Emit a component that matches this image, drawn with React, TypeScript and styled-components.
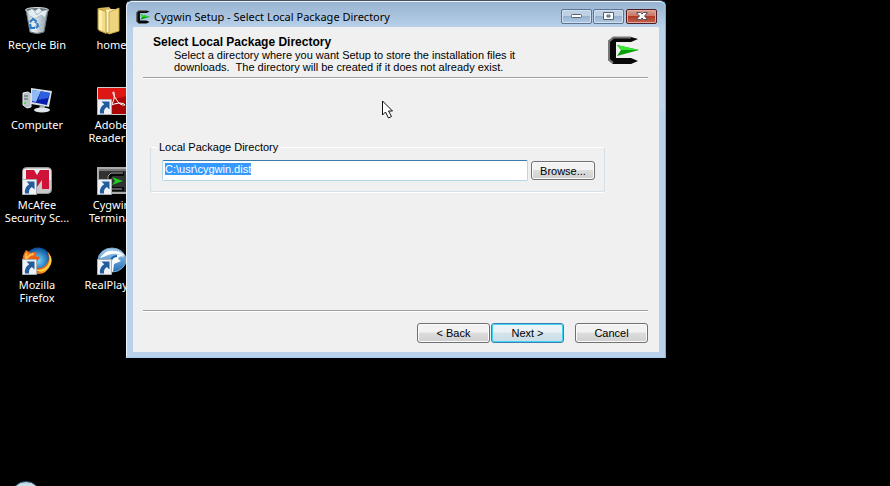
import { useEffect, useRef, type ReactNode } from "react";
import styled, { createGlobalStyle, css } from "styled-components";

const GlobalStyle = createGlobalStyle`
  * { box-sizing: border-box; }
  body { margin: 0; background: #000; }
`;

const Desktop = styled.div`
  position: relative;
  display: flex;
  flex-direction: column;
  justify-content: space-between;
  min-height: 100vh;
  overflow: hidden;
  background: #000;
  color: #fff;
  font-family: "Noto Sans", "Open Sans", sans-serif;
`;

const Shortcuts = styled.nav`
  display: grid;
  grid-template-columns: 74px 75px;
  grid-auto-rows: 80px;
  padding-top: 7px;
`;

const Shortcut = styled.a`
  display: flex;
  flex-direction: column;
  align-items: center;
  gap: 3px;
  color: #fff;
  font-size: 11px;
  line-height: 13px;
  text-align: center;
  text-decoration: none;
  white-space: pre;
`;

const ShortcutIcon = styled.svg`
  width: 30px;
  height: 28px;
  flex: none;
`;

const Taskbar = styled.footer`
  display: flex;
  height: 5px;
  padding-left: 11px;
  overflow: hidden;
`;

const StartButton = styled.button`
  width: 30px;
  height: 30px;
  flex: none;
  padding: 0;
  border: 1px solid #28587c;
  border-radius: 50%;
  background: linear-gradient(#b4cfde, #e0ebf0 5px, #32749f);
`;

const Window = styled.section`
  position: absolute;
  top: 0;
  left: 126px;
  width: 540px;
  max-width: calc(100% - 126px);
  padding: 0 6px 5px;
  border: 1px solid #e9f3fb;
  border-top-color: #45515e;
  border-right-color: #42c7ea;
  border-bottom-color: #a6cdeb;
  border-radius: 6px 6px 0 0;
  background: linear-gradient(#97b3d1, #b9d1ea 27px, #bfd5ec 107px, #b9d1ea 108px);
  box-shadow: inset 0 1px #eef6fc;
  color: #000;
`;

const TitleBar = styled.header`
  display: flex;
  align-items: center;
  gap: 4px;
  height: 26px;
  padding: 5px 2px 0 3px;
`;

const TitleIcon = styled.svg`
  width: 14px;
  height: 14px;
  flex: none;
`;

const Title = styled.h1`
  flex: 1;
  margin: 0;
  overflow: hidden;
  font-size: 11px;
  font-weight: 400;
  line-height: 16px;
  white-space: nowrap;
`;

const Captions = styled.div`
  display: flex;
  gap: 1px;
`;

const CaptionButton = styled.button<{ $close?: boolean }>`
  display: grid;
  place-items: center;
  width: 31px;
  height: 15px;
  padding: 0;
  border: 1px solid #5d7492;
  border-radius: 2px;
  background: linear-gradient(#bdd0e4 45%, #97b2d0 50%, #b2cae3);
  box-shadow: inset 0 0 0 1px #d0dfee;
  ${({ $close }) =>
    $close &&
    css`
      margin-left: 1px;
      border-color: #501f25;
      background: linear-gradient(#d9a296, #ca7564 45%, #b13a25 50%, #c5614e);
      box-shadow: inset 0 0 0 1px #e0a99f;
    `}
`;

const Client = styled.form`
  display: flex;
  flex-direction: column;
  margin: 0;
  padding: 8px 11px 9px 10px;
  background: #f0f0f0;
  font-family: "Liberation Sans", Arial, sans-serif;
  font-size: 11px;
  line-height: 12px;
`;

const PageHeader = styled.div`
  display: flex;
  justify-content: space-between;
  height: 42px;
  padding: 0 9px 0 10px;
`;

const Heading = styled.h2`
  margin: 0;
  font-size: 12px;
  font-weight: 700;
  line-height: 14px;
`;

const Description = styled.p`
  margin: 0;
  padding-left: 21px;
  white-space: pre-wrap;
`;

const Logo = styled.svg`
  width: 32px;
  height: 28px;
  flex: none;
  margin-top: 1px;
`;

const Divider = styled.hr`
  width: 100%;
  height: 2px;
  margin: 0;
  border: 0;
  border-top: 1px solid #a0a0a0;
  border-bottom: 1px solid #fff;
`;

const Group = styled.fieldset`
  display: flex;
  min-width: 0;
  margin: 62px 43px 117px 7px;
  padding: 7px 9px 11px 11px;
  border: 1px solid #d5dfe5;
  border-top-color: #fff;
  border-bottom-color: #fff;
  border-radius: 3px;
  box-shadow: inset 0 -1px #d5dfe5;
`;

const Legend = styled.legend`
  margin-left: -5px;
  padding: 0 2px;
`;

const Field = styled.div`
  display: flex;
  align-items: center;
  gap: 3px;
  width: 100%;
`;

const PathInput = styled.input`
  flex: 1;
  min-width: 0;
  height: 21px;
  padding: 0 2px 3px;
  border: 1px solid #b5d5e9;
  border-top-color: #3d7bad;
  border-radius: 2px;
  outline: none;
  background: #fff;
  font: inherit;
  &::selection {
    background: rgba(51, 153, 255, 0.99);
    color: #fff;
  }
`;

const PushButton = styled.button<{ $primary?: boolean; $compact?: boolean }>`
  width: ${({ $compact }) => ($compact ? 64 : 73)}px;
  height: ${({ $compact }) => ($compact ? 19 : 20)}px;
  padding: 0;
  border: 1px solid ${({ $primary }) => ($primary ? "#3c7fb1" : "#707070")};
  border-radius: 3px;
  background: linear-gradient(#f2f2f2 45%, #dddddd 50%, #cfcfcf);
  box-shadow: inset 0 0 0 1px #fafafa;
  color: #000;
  font: inherit;
  ${({ $primary }) =>
    $primary &&
    css`
      background: linear-gradient(#eaf2f5 45%, #d5e4ea 50%, #c9dde5);
      box-shadow: inset 0 0 0 1px #42d2f7;
    `}
`;

const Actions = styled.div`
  display: flex;
  justify-content: flex-end;
  gap: 11px;
  padding-top: 11px;
`;

const Steps = styled.div`
  display: flex;
  gap: 1px;
`;

const Pointer = styled.svg`
  position: absolute;
  top: 99px;
  left: 381px;
  width: 14px;
  height: 21px;
  pointer-events: none;
`;

const LinkArrow = () => (
  <g>
    <path d="M0.5 12.5h14v15h-14z" fill="#eef2f6" stroke="#a9aeb4" />
    <path d="M4.500 14.500h8v8l-2.600-2.500q-3.600 2-2.800 6.500H3q-1-6 4.200-9.300z" fill="#245b9d" />
  </g>
);

const CygwinMark = () => (
  <>
    <path d="M24 1H6L1 5v19l5 4h18l7-3-7-3H9V6h15l7-3z" fill="#080808" />
    <path d="M24 1.500H6.500L2 5.500v18l4 3.500" fill="none" stroke="#777" strokeWidth="2" />
    <path d="M10 9l22 5-22 6 4-6z" fill="#079e0a" />
    <path d="M10 9l22 5H14z" fill="#36e832" />
  </>
);

const RecycleArt = () => (
  <>
    <defs>
      <linearGradient id="bin">
        <stop stopColor="#a9b9c1" /><stop offset=".35" stopColor="#e8f1f5" /><stop offset="1" stopColor="#8899a3" />
      </linearGradient>
    </defs>
    <path d="M4 3l4 22q7 3 14 0l4-22z" fill="url(#bin)" stroke="#68757d" />
    <ellipse cx="15" cy="3" rx="11.500" ry="2.500" fill="#69757b" stroke="#d5dce0" />
    <path d="M6 4l4-2 3 2 4-3 3 3 5-1-2 7-5-2-4 4-6-3z" fill="#e4ecef" />
    <path d="M8 9l5 3 7-4 2 7-5 5 3 4M9 22l7-5M12 3l3 5 5-4" fill="none" stroke="#a7bac5" />
    <path d="M8 15l3-3 3 2-1 2M8 17l1 4h4M15 16l1 3-2 2" fill="none" stroke="#2879c8" strokeWidth="2" />
  </>
);

const FolderArt = () => (
  <>
    <path d="M2 1l10-1 2 2h7v22l-9 3-10-3z" fill="#d9bb59" />
    <path d="M9 3l9-1v23H9z" fill="#fff5c1" />
    <path d="M1 1.500l8 3v22l-8-4z" fill="#f3dc8a" stroke="#b99940" />
    <path d="M12 5l10-4v23l-10 3z" fill="#edd47d" stroke="#c5a84e" />
    <path d="M2 3l3 1v20l-3-2z" fill="#fff0ae" />
  </>
);

const ComputerArt = () => (
  <>
    <path d="M1 6l5-1 3 2v13l-4 1-4-3z" fill="#b9c3c9" stroke="#e9eef0" />
    <path d="M2 9h4M2 12h4" stroke="#4b5a60" /><path d="M2 16h2" stroke="#48e744" strokeWidth="2" />
    <path d="M9 1l21 3-3 16-18-3z" fill="#d6e0e5" />
    <path d="M10 3l18 3-3 12-15-3z" fill="#071ca9" />
    <path d="M10 3l9 1-5 11-4-1z" fill="#91b9f3" /><path d="M19 4l9 2-2 5-10 2z" fill="#2c60de" />
    <path d="M18 18l5 1-1 4-5-1z" fill="#9dabb4" /><ellipse cx="20" cy="23" rx="8" ry="2.500" fill="#dfe6e9" />
  </>
);

const AdobeArt = () => (
  <>
    <path d="M.5.5h29v27H.5z" fill="#a90606" stroke="#ccc" />
    <path d="M1 1h28v8L1 17z" fill="#df1714" />
    <path d="M16 5q2-1 1 7-2 8-6 10-1-4 11-6 6 0 6 2-5 1-9-6-4-6-3-7z" fill="none" stroke="#fff" />
    <LinkArrow />
  </>
);

const McAfeeArt = () => (
  <>
    <rect x=".5" y=".5" width="29" height="26" rx="4" fill="#c9c9c9" stroke="#999" />
    <path d="M3 2h24q2 0 2 3v8H1V4q0-2 2-2z" fill="#ededed" />
    <path d="M4 22V3h8l3 5 3-5h9v19h-7V13l-5 7-4-7v9z" fill="#cf1238" />
    <LinkArrow />
  </>
);

const TerminalArt = () => (
  <>
    <path d="M1 1h29v25H1z" fill="#303330" stroke="#ababab" strokeWidth="2" />
    <path d="M2 3h28" stroke="#777" strokeWidth="2" />
    <path d="M27 7H15l-3 3v8l3 4h12" fill="none" stroke="#080808" strokeWidth="4" />
    <path d="M26 6H14l-3 3v9l4 4h10" fill="none" stroke="#aaa" />
    <path d="M15 10l11 4-11 4 3-4z" fill="#20ce22" />
    <LinkArrow />
  </>
);

const FirefoxArt = () => (
  <>
    <defs>
      <radialGradient id="globe"><stop stopColor="#74d8ff" /><stop offset="1" stopColor="#064c98" /></radialGradient>
      <linearGradient id="flame" x2="1" y2="1"><stop stopColor="#ed721b" /><stop offset=".65" stopColor="#e54e0d" /><stop offset="1" stopColor="#ffcf3d" /></linearGradient>
    </defs>
    <circle cx="16" cy="13.500" r="13" fill="url(#globe)" />
    <path d="M4 3l5 3q4-2 6 0l-2 3 5 1-3 5h-4q2 7 8 6 6-2 8-9l-1-7q5 6 3 12-4 10-13 10Q4 27 1 18-1 10 4 3z" fill="url(#flame)" />
    <path d="M26 5q4 10-3 16-5 3-10 1 5 5 11 1 7-6 5-13z" fill="#ffd43d" />
    <path d="M5 6q-2 3-1 6l4-4 4-1" fill="none" stroke="#ffc04b" strokeWidth="2" />
    <LinkArrow />
  </>
);

const RealPlayerArt = () => (
  <>
    <defs><linearGradient id="real" x2="0" y2="1"><stop stopColor="#a9cfee" /><stop offset="1" stopColor="#2171b8" /></linearGradient></defs>
    <ellipse cx="15" cy="13" rx="14" ry="12" fill="url(#real)" stroke="#7ca9cf" />
    <path d="M3 11Q9 2 18 4q6 0 10 5-9-4-17-1-4 2-8 3z" fill="#fff" />
    <path d="M12 22q1-10 5-13 7-4 10 1-5-2-6 2l3 2-7 3-1 8z" fill="#fff" />
    <path d="M13 17q1-8 7-8" fill="none" stroke="#1761aa" strokeWidth="2" />
    <LinkArrow />
  </>
);

const shortcuts: { label: string; art: ReactNode }[] = [
  { label: "Recycle Bin", art: <RecycleArt /> },
  { label: "home", art: <FolderArt /> },
  { label: "Computer", art: <ComputerArt /> },
  { label: "Adobe\nReader X", art: <AdobeArt /> },
  { label: "McAfee\nSecurity Sc...", art: <McAfeeArt /> },
  { label: "Cygwin\nTerminal", art: <TerminalArt /> },
  { label: "Mozilla\nFirefox", art: <FirefoxArt /> },
  { label: "RealPlayer", art: <RealPlayerArt /> },
];

export default function App() {
  const path = useRef<HTMLInputElement>(null);

  useEffect(() => {
    path.current?.focus();
    path.current?.select();
  }, []);

  return (
    <Desktop>
      <GlobalStyle />
      <Shortcuts aria-label="Desktop">
        {shortcuts.map(({ label, art }) => (
          <Shortcut href="#" key={label}>
            <ShortcutIcon viewBox="0 0 30 28" aria-hidden="true">{art}</ShortcutIcon>
            <span>{label}</span>
          </Shortcut>
        ))}
      </Shortcuts>
      <Taskbar>
        <StartButton aria-label="Start" />
      </Taskbar>

      <Window aria-labelledby="window-title">
        <TitleBar>
          <TitleIcon viewBox="0 0 32 29" preserveAspectRatio="none" aria-hidden="true"><CygwinMark /></TitleIcon>
          <Title id="window-title">Cygwin Setup - Select Local Package Directory</Title>
          <Captions>
            <CaptionButton aria-label="Minimize">
              <svg width="12" height="5"><rect x=".5" y=".5" width="10" height="3" rx="1" fill="#fff" stroke="#53606d" /></svg>
            </CaptionButton>
            <CaptionButton aria-label="Maximize">
              <svg width="11" height="9"><path d="M.5.5h10v7H.5zM4 3h3v2H4z" fill="#fff" stroke="#53606d" fillRule="evenodd" /></svg>
            </CaptionButton>
            <CaptionButton $close aria-label="Close">
              <svg width="12" height="9"><path d="M.5.5h4L6 2 7.500.5h4l-3 3.500 3 3.500h-4L6 6 4.500 7.500h-4l3-3.500z" fill="#fff" stroke="#535565" /></svg>
            </CaptionButton>
          </Captions>
        </TitleBar>

        <Client onSubmit={(event) => event.preventDefault()}>
          <PageHeader>
            <div>
              <Heading>Select Local Package Directory</Heading>
              <Description>
                {"Select a directory where you want Setup to store the installation files it\ndownloads.  The directory will be created if it does not already exist."}
              </Description>
            </div>
            <Logo viewBox="0 0 32 28" aria-hidden="true"><CygwinMark /></Logo>
          </PageHeader>
          <Divider />
          <Group>
            <Legend><label htmlFor="package-directory">Local Package Directory</label></Legend>
            <Field>
              <PathInput ref={path} id="package-directory" type="text" defaultValue="C:\usr\cygwin.dist" spellCheck={false} />
              <PushButton $compact type="button">Browse...</PushButton>
            </Field>
          </Group>
          <Divider />
          <Actions>
            <Steps>
              <PushButton type="button">&lt; Back</PushButton>
              <PushButton $primary type="submit">Next &gt;</PushButton>
            </Steps>
            <PushButton type="button">Cancel</PushButton>
          </Actions>
        </Client>
      </Window>

      <Pointer viewBox="0 0 14 21" aria-hidden="true">
        <path d="M1.500 2v14l3-3 3 6 3-1.500-3-5.500h4z" fill="#fff" stroke="#111" />
      </Pointer>
    </Desktop>
  );
}
